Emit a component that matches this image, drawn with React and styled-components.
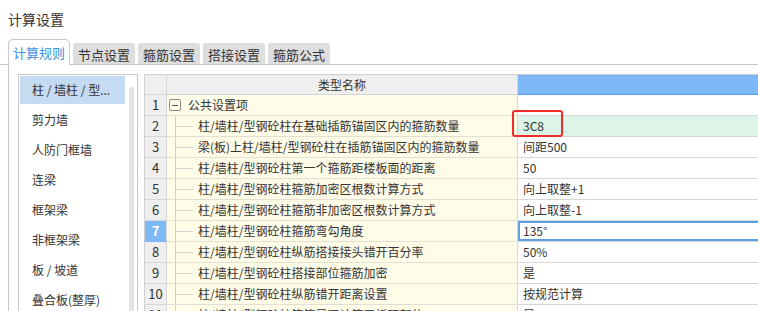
import React from 'react';
import styled, { createGlobalStyle } from 'styled-components';

const GlobalStyle = createGlobalStyle`
    html, body {
        margin: 0;
        padding: 0;
        background: #fff;
    }
    body {
        font-family: "Noto Sans CJK SC", "Noto Sans", sans-serif;
        color: #333;
        font-size: 12px;
        overflow: hidden;
    }
`;

const Page = styled.div`
    width: 758px;
    height: 311px;
    overflow: hidden;
`;

const Title = styled.div`
    padding: 9px 0 0 8px;
    height: 20px;
    line-height: 20px;
    font-size: 14px;
    color: #333;
`;

const TabBar = styled.div`
    display: flex;
    align-items: flex-end;
    gap: 3px;
    margin-top: 10px;
    padding-left: 8px;
    height: 25px;
    border-bottom: 1px solid #c9c9c9;
`;

const Tab = styled.div`
    box-sizing: border-box;
    height: ${props => props.active ? '26px' : '21px'};
    margin-bottom: ${props => props.active ? '-1px' : '0'};
    padding: ${props => props.active ? '3px 4px 0' : '1px 4px 0'};
    background: ${props => props.active ? '#fff' : '#dedede'};
    border: 1px solid ${props => props.active ? '#c9c9c9' : '#dedede'};
    border-bottom: none;
    border-radius: ${props => props.active ? '5px 5px 0 0' : '3px 3px 0 0'};
    color: ${props => props.active ? '#3a8ee6' : '#333'};
    font-size: 13px;
    line-height: 19px;
    white-space: nowrap;
`;

const Body = styled.div`
    display: flex;
    align-items: flex-start;
    gap: 6px;
    margin-left: 8px;
    padding: 9px 0 0 9px;
    border-left: 1px solid #c9c9c9;
    height: 300px;
`;

const SidePanel = styled.div`
    box-sizing: border-box;
    flex: 0 0 120px;
    height: 260px;
    display: flex;
    border: 1px solid #c9c9c9;
    border-bottom: none;
    padding: 1px 0 0 1px;
`;

const SideList = styled.div`
    flex: 0 0 105px;
    display: flex;
    flex-direction: column;
    gap: 2px;
`;

const SideItem = styled.div`
    height: 28px;
    line-height: 28px;
    padding-left: 12px;
    font-size: 12px;
    color: #333;
    background: ${props => props.selected ? '#c4dbf1' : 'transparent'};
    white-space: nowrap;
    overflow: hidden;
`;

const ScrollTrack = styled.div`
    flex: 1;
    display: flex;
    justify-content: center;
    padding-top: 11px;
`;

const ScrollThumb = styled.div`
    width: 5px;
    height: 240px;
    border-radius: 3px 3px 0 0;
    background: #e4e4e4;
`;

const Grid = styled.table`
    border-collapse: collapse;
    table-layout: fixed;
    width: 640px;
    font-size: 12px;
    border-left: 1px solid #cfcfcf;
    border-top: 1px solid #cfcfcf;
`;

const HeadCell = styled.th`
    height: 19px;
    padding: 0;
    font-weight: normal;
    line-height: 19px;
    text-align: center;
    color: #333;
    background: ${props => props.blue ? '#7cb9f6' : '#efefef'};
    border-right: 1px solid ${props => props.blue ? '#7cb9f6' : '#d6d6d6'};
    border-bottom: 1px solid ${props => props.blue ? '#5d9fe4' : '#d6d6d6'};
`;

const NumCell = styled.td`
    height: 20px;
    padding: 0;
    text-align: center;
    line-height: 20px;
    font-size: 13px;
    font-weight: ${props => props.active ? 'bold' : 'normal'};
    color: ${props => props.active ? '#fff' : '#333'};
    background: ${props => props.active ? '#7fb9f5' : '#efefef'};
    border-right: 1px solid #d6d6d6;
    border-bottom: 1px solid ${props => props.active ? '#7fb9f5' : '#d6d6d6'};
`;

const NameCell = styled.td`
    height: 20px;
    padding: 0;
    background: #fffce8;
    border-right: 1px solid #d6d6d6;
    border-bottom: 1px solid #e2e0d2;
`;

const NameInner = styled.div`
    display: flex;
    align-items: center;
    height: 20px;
    white-space: nowrap;
    overflow: hidden;
`;

const Connector = styled.span`
    flex: 0 0 26px;
    align-self: stretch;
    margin-bottom: -1px;
    background:
        linear-gradient(#cfcfcf, #cfcfcf) 8px 0 / 1px 100% no-repeat,
        linear-gradient(#d6d6d6, #d6d6d6) 8px 10px / 18px 1px no-repeat;
`;

const Toggle = styled.span`
    box-sizing: border-box;
    flex: 0 0 12px;
    height: 12px;
    margin-left: 2px;
    border: 1px solid #8a8a8a;
    border-radius: 2px;
    display: flex;
    align-items: center;
    justify-content: center;
    &::after {
        content: "";
        width: 6px;
        height: 1px;
        background: #555;
    }
`;

const NameText = styled.span`
    margin-left: ${props => props.root ? '7px' : '5px'};
    line-height: 20px;
`;

const ValueCell = styled.td`
    position: relative;
    height: 20px;
    padding: 0 0 0 5px;
    line-height: 20px;
    white-space: nowrap;
    background: ${props => props.hint ? '#ddf4e8' : '#fff'};
    border-bottom: 1px solid #d6d6d6;
    box-shadow: ${props => props.focused ? 'inset 0 0 0 2px #5fa0e6' : 'none'};
`;

const Marker = styled.span`
    position: absolute;
    left: -6px;
    top: -6px;
    width: 51px;
    height: 27px;
    box-sizing: border-box;
    border: 2px solid #f22b2b;
    border-radius: 3px;
    pointer-events: none;
`;

const sideItems = ['柱 / 墙柱 / 型...', '剪力墙', '人防门框墙', '连梁', '框架梁', '非框架梁', '板 / 坡道', '叠合板(整厚)'];

const rows = [
    { name: '公共设置项', value: '', root: true },
    { name: '柱/墙柱/型钢砼柱在基础插筋锚固区内的箍筋数量', value: '3C8', hint: true, marked: true },
    { name: '梁(板)上柱/墙柱/型钢砼柱在插筋锚固区内的箍筋数量', value: '间距500' },
    { name: '柱/墙柱/型钢砼柱第一个箍筋距楼板面的距离', value: '50' },
    { name: '柱/墙柱/型钢砼柱箍筋加密区根数计算方式', value: '向上取整+1' },
    { name: '柱/墙柱/型钢砼柱箍筋非加密区根数计算方式', value: '向上取整-1' },
    { name: '柱/墙柱/型钢砼柱箍筋弯勾角度', value: '135°', focused: true },
    { name: '柱/墙柱/型钢砼柱纵筋搭接接头错开百分率', value: '50%' },
    { name: '柱/墙柱/型钢砼柱搭接部位箍筋加密', value: '是' },
    { name: '柱/墙柱/型钢砼柱纵筋错开距离设置', value: '按规范计算' },
    { name: '柱/墙柱/型钢砼柱箍筋是否计算至板顶部位', value: '是' },
];

const App = () => {
    return (
        <Page>
            <GlobalStyle />
            <Title>计算设置</Title>
            <TabBar>
                <Tab active>计算规则</Tab>
                <Tab>节点设置</Tab>
                <Tab>箍筋设置</Tab>
                <Tab>搭接设置</Tab>
                <Tab>箍筋公式</Tab>
            </TabBar>
            <Body>
                <SidePanel>
                    <SideList>
                        {sideItems.map((item, i) => (
                            <SideItem key={item} selected={i === 0}>{item}</SideItem>
                        ))}
                    </SideList>
                    <ScrollTrack>
                        <ScrollThumb />
                    </ScrollTrack>
                </SidePanel>
                <Grid>
                    <colgroup>
                        <col style={{ width: '22px' }} />
                        <col style={{ width: '351px' }} />
                        <col style={{ width: '267px' }} />
                    </colgroup>
                    <thead>
                        <tr>
                            <HeadCell />
                            <HeadCell>类型名称</HeadCell>
                            <HeadCell blue />
                        </tr>
                    </thead>
                    <tbody>
                        {rows.map((row, i) => (
                            <tr key={i}>
                                <NumCell active={row.focused}>{i + 1}</NumCell>
                                <NameCell>
                                    <NameInner>
                                        {row.root ? <Toggle /> : <Connector />}
                                        <NameText root={row.root}>{row.name}</NameText>
                                    </NameInner>
                                </NameCell>
                                <ValueCell hint={row.hint} focused={row.focused}>
                                    {row.value}
                                    {row.marked && <Marker />}
                                </ValueCell>
                            </tr>
                        ))}
                    </tbody>
                </Grid>
            </Body>
        </Page>
    );
};

export default App;
